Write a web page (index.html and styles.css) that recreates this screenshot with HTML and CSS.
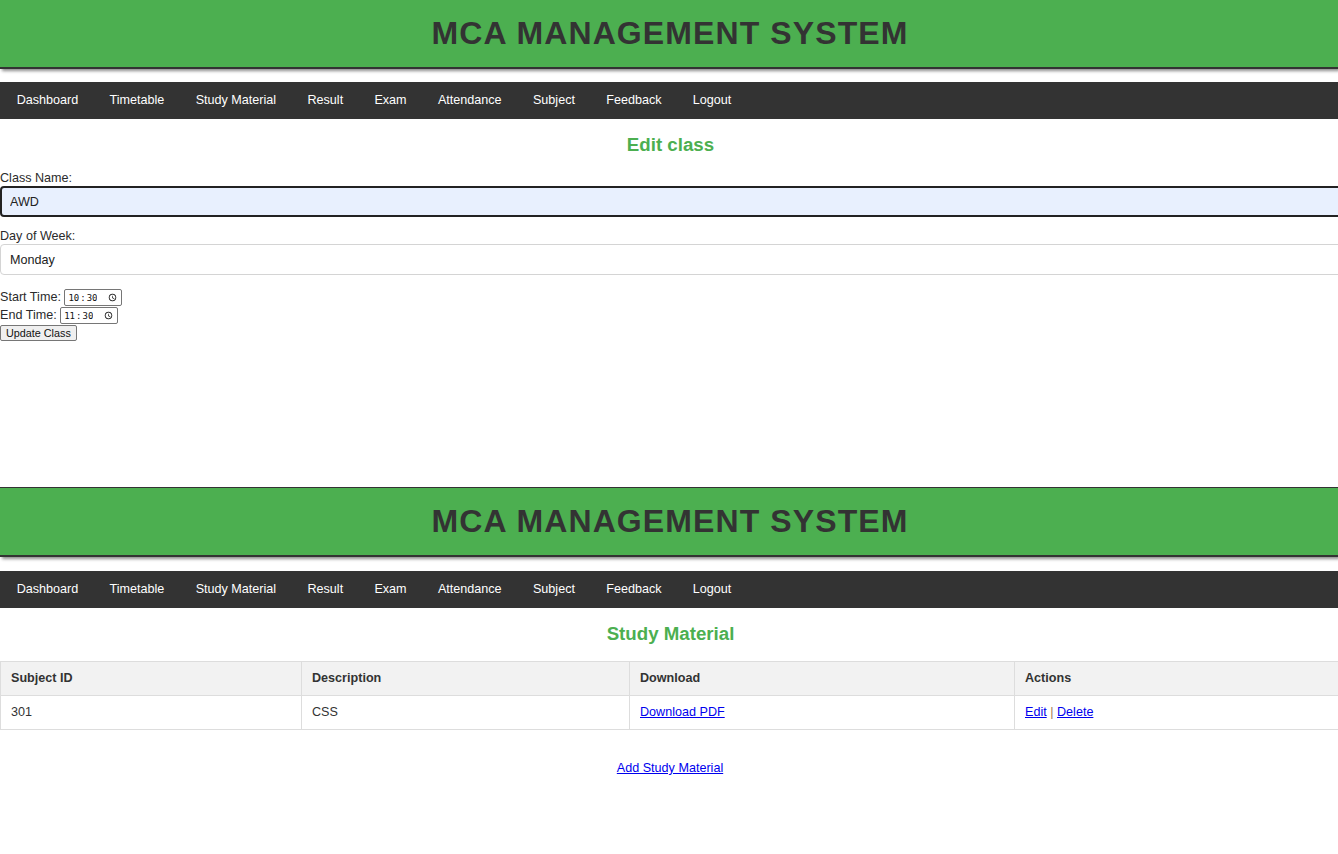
FILE: index.html
```html
<!DOCTYPE html>
<html lang="en">
<head>
<meta charset="utf-8">
<title>MCA Management System</title>
<link rel="stylesheet" href="styles.css">
</head>
<body>
<div class="page page-edit">
  <header class="site-header"><h1>MCA MANAGEMENT SYSTEM</h1></header>
  <nav class="site-nav">
    <a href="#">Dashboard</a><a href="#">Timetable</a><a href="#">Study Material</a><a href="#">Result</a><a href="#">Exam</a><a href="#">Attendance</a><a href="#">Subject</a><a href="#">Feedback</a><a href="#">Logout</a>
  </nav>
  <main class="content">
    <h2 class="page-title">Edit class</h2>
    <form class="edit-form">
      <label class="field-label" for="cname">Class Name:</label>
      <input class="text-input focused" id="cname" type="text" value="AWD">
      <label class="field-label" for="day">Day of Week:</label>
      <select class="select-input" id="day"><option>Monday</option></select>
      <div class="time-row"><label for="st">Start Time:</label> <input class="time-input" id="st" type="time" value="10:30"></div>
      <div class="time-row"><label for="et">End Time:</label> <input class="time-input" id="et" type="time" value="11:30"></div>
      <button class="submit-btn" type="button">Update Class</button>
    </form>
  </main>
</div>
<div class="page page-materials">
  <header class="site-header"><h1>MCA MANAGEMENT SYSTEM</h1></header>
  <nav class="site-nav">
    <a href="#">Dashboard</a><a href="#">Timetable</a><a href="#">Study Material</a><a href="#">Result</a><a href="#">Exam</a><a href="#">Attendance</a><a href="#">Subject</a><a href="#">Feedback</a><a href="#">Logout</a>
  </nav>
  <main class="content">
    <h2 class="page-title">Study Material</h2>
    <table class="data-table">
      <colgroup><col class="c1"><col class="c2"><col class="c3"><col class="c4"></colgroup>
      <thead>
        <tr><th>Subject ID</th><th>Description</th><th>Download</th><th>Actions</th></tr>
      </thead>
      <tbody>
        <tr><td>301</td><td>CSS</td><td><a class="link" href="#">Download PDF</a></td><td><a class="link" href="#">Edit</a> <span class="sep">|</span> <a class="link" href="#">Delete</a></td></tr>
      </tbody>
    </table>
    <p class="add-link"><a class="link" href="#">Add Study Material</a></p>
  </main>
</div>
</body>
</html>
```
FILE: styles.css
```css
html, body {
  margin: 0;
  padding: 0;
  background: #fff;
}
body {
  font-family: "Liberation Sans", Arial, sans-serif;
  font-size: 12.6px;
  color: #2b2b2b;
}
.page {
  overflow: hidden;
  width: 1338px;
}
.page-edit {
  height: 487px;
}
.page-materials {
  border-top: 1px solid #333;
  height: 366px;
}
.site-header {
  background: #4caf50;
  height: 67px;
  border-bottom: 2px solid #333;
  box-shadow: 2px 2px 3px rgba(0, 0, 0, 0.45);
  display: flex;
  align-items: center;
  justify-content: center;
}
.site-header h1 {
  margin: 0;
  font-size: 32px;
  font-weight: bold;
  letter-spacing: 1.1px;
  color: #333;
  line-height: 1;
  padding-left: 2px;
  padding-bottom: 2px;
}
.site-nav {
  margin-top: 13px;
  background: #333;
  height: 37px;
  display: flex;
  align-items: center;
  padding-left: 1px;
}
.page-materials .site-nav {
  margin-top: 14px;
}
.site-nav a {
  color: #fff;
  text-decoration: none;
  padding: 0 15.65px;
  line-height: 37px;
}
.page-title {
  margin: 15px 0 15px;
  padding-left: 3px;
  text-align: center;
  color: #4caf50;
  font-size: 18.7px;
  line-height: 21px;
  font-weight: bold;
}
.page-materials .page-title {
  margin-bottom: 17px;
}
.edit-form {
  display: block;
}
.field-label {
  display: block;
  line-height: 16px;
  padding-top: 1px;
  margin-top: -1px;
}
.text-input, .select-input {
  display: block;
  box-sizing: border-box;
  width: 1380px;
  height: 31px;
  font-family: "Liberation Sans", Arial, sans-serif;
  font-size: 12.6px;
  color: #222;
  padding: 0 8px;
  border-radius: 4px;
  margin: 0;
}
.text-input {
  background: #e8f0fe;
  border: 2px solid #222;
  margin-bottom: 11px;
  outline: none;
}
.select-input {
  background: #fff;
  border: 1px solid #d4d4d4;
  appearance: none;
  -webkit-appearance: none;
  padding-left: 9px;
  margin-bottom: 13px;
}
.time-row {
  line-height: 18px;
  height: 18px;
}
.time-input {
  box-sizing: border-box;
  height: 17px;
  width: 58px;
  font-family: "DejaVu Sans Mono", monospace;
  font-size: 9px;
  padding: 0 1px 0 2px;
  border: 1px solid #767676;
  border-radius: 2px;
  vertical-align: middle;
  margin: 0;
  background: #fff;
  color: #111;
}
.submit-btn {
  display: block;
  margin-top: 1px;
  font-family: "Liberation Sans", Arial, sans-serif;
  font-size: 10.8px;
  line-height: 12px;
  padding: 1px 5px;
  border: 1px solid #767676;
  border-radius: 2px;
  background: #efefef;
  color: #111;
}
.data-table {
  border-collapse: collapse;
  table-layout: fixed;
  width: 1440px;
}
.data-table .c1 { width: 301px; }
.data-table .c2 { width: 328px; }
.data-table .c3 { width: 385px; }
.data-table .c4 { width: 426px; }
.data-table th, .data-table td {
  border: 1px solid #ddd;
  padding: 9px 10px;
  line-height: 15px;
  text-align: left;
  color: #333;
}
.data-table th {
  background: #f2f2f2;
  font-weight: bold;
}
.link {
  color: #0000ee;
  text-decoration: underline;
}
.sep {
  color: #a07a50;
}
.add-link {
  text-align: center;
  margin: 31px 0 0;
  padding-left: 2px;
  line-height: 15px;
}
```
